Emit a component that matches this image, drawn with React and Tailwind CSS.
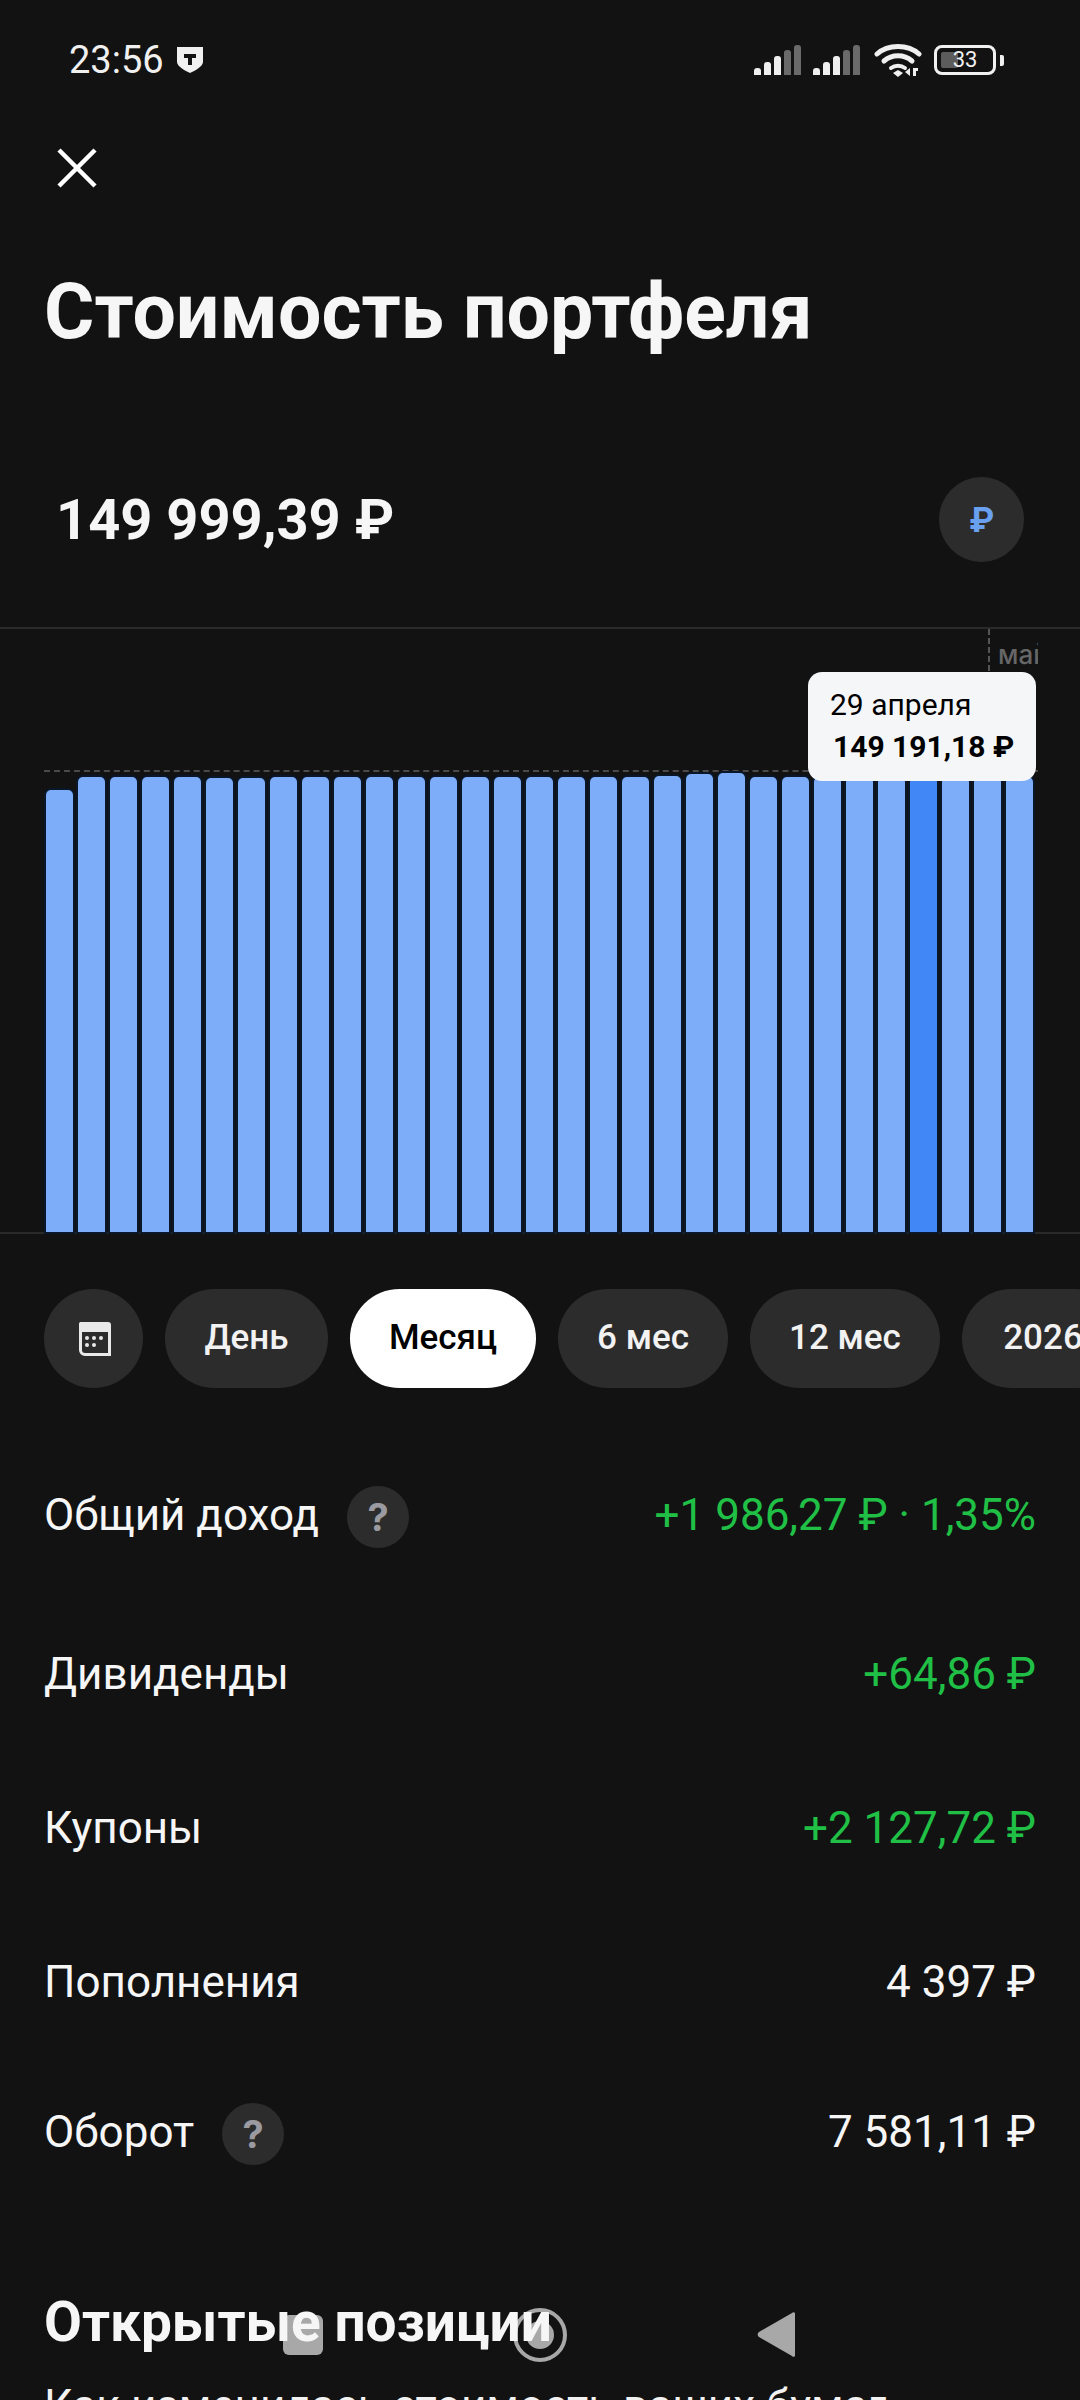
const allTops = [790,777,777,777,777,778,778,777,777,777,777,777,777,777,777,777,777,777,777,776,774,773,777,777,777,777,777,777,777,777,777];

const inter = { fontFamily: 'Inter, "Noto Sans", sans-serif' };
const roboto = { fontFamily: 'Roboto, "Noto Sans", sans-serif' };

function Signal() {
  const hs = [7, 13, 19, 25, 30];
  return (
    <div className="flex items-end gap-[3px] h-[30px]">
      {hs.map((h, i) => (
        <div
          key={i}
          className={i > 2 ? "w-[7px] rounded-t-[3px] bg-[#6a6a6a]" : "w-[7px] rounded-t-[3px] bg-[#efefef]"}
          style={{ height: h }}
        />
      ))}
    </div>
  );
}

function Help() {
  return (
    <div className="w-[62px] h-[62px] mt-[4px] rounded-full bg-[#2c2c2c] flex items-center justify-center text-[#9a9aa0] text-[38px] font-bold" style={inter}>
      ?
    </div>
  );
}

function Row({ label, value, green, help, className }) {
  return (
    <div className={"flex items-center justify-between px-[44px] " + className} style={roboto}>
      <div className="flex items-center gap-[28px] text-[44px] text-[#f6f6f6]">
        <span>{label}</span>
        {help && <Help />}
      </div>
      <div className={green ? "text-[44px] text-[#20c046]" : "text-[44px] text-[#f6f6f6]"}>{value}</div>
    </div>
  );
}

function Chip({ children, active, className = "" }) {
  return (
    <div
      className={
        "h-[99px] shrink-0 rounded-full flex items-center justify-center text-[35px] font-medium " +
        (active ? "bg-white text-black " : "bg-[#2c2c2c] text-[#f2f2f2] ") +
        className
      }
      style={roboto}
    >
      {children}
    </div>
  );
}

export default function App() {
  return (
    <div className="relative w-[1080px] h-[2400px] overflow-hidden bg-[#121212] text-white" style={inter}>
      {/* nav overlay, behind the scrolled text */}
      <div className="absolute left-[283px] top-[2315px] w-[40px] h-[40px] rounded-[6px] bg-[#a8a8a8]" />
      <div className="absolute left-[513px] top-[2308px] w-[54px] h-[54px] rounded-full border-[4px] border-[#a8a8a8] flex items-center justify-center">
        <div className="w-[28px] h-[28px] rounded-full bg-[#a8a8a8]" />
      </div>
      <svg className="absolute left-[757px] top-[2311px]" width="38" height="47" viewBox="0 0 38 47">
        <path d="M38 2v43a2 2 0 0 1-3 0L2 26a3 3 0 0 1 0-5L35 2a2 2 0 0 1 3 0z" fill="#a8a8a8" />
      </svg>

      <div className="relative z-10">
        {/* status bar */}
        <div className="flex items-center justify-between h-[60px] mt-[30px] pl-[69px] pr-[76px]">
          <div className="flex items-center gap-[12px]">
            <span className="text-[38px] text-[#f0f0f0]" style={roboto}>23:56</span>
            <svg width="28" height="28" viewBox="0 0 28 28">
              <path d="M1 1h26v15c0 4-8 9-13 11C9 25 1 20 1 16z" fill="#f0f0f0" />
              <path d="M8 8h12v4h-4v7h-4v-7H8z" fill="#121212" />
            </svg>
          </div>
          <div className="flex items-center gap-[12px]">
            <Signal />
            <Signal />
            <svg width="48" height="36" viewBox="0 0 48 36" className="ml-[2px]">
              <g fill="none" stroke="#f0f0f0" strokeWidth="5" strokeLinecap="round">
                <path d="M3 12C14 2 34 2 45 12" />
                <path d="M10 19c8-7 20-7 28 0" />
                <path d="M17 26c4-3 10-3 14 0" strokeWidth="4" />
              </g>
              <path d="M24 35l-5-4 5-3 5 3z" fill="#f0f0f0" />
              <path d="M36 26v8l-5-4zM39 26h5v3h-2v5h-3z" fill="#f0f0f0" />
            </svg>
            <div className="flex items-center gap-[4px]">
              <div className="relative w-[62px] h-[30px] rounded-[8px] border-[3px] border-[#f0f0f0] flex items-center justify-center">
                <div className="absolute left-[4px] top-[4px] bottom-[4px] w-[17px] rounded-[2px] bg-[#5c5c5c]" />
                <span className="relative text-[22px] leading-none text-[#f0f0f0]" style={roboto}>33</span>
              </div>
              <div className="w-[4px] h-[11px] rounded-r-[2px] bg-[#f0f0f0]" />
            </div>
          </div>
        </div>

        {/* close */}
        <div className="pl-[57px] mt-[58px]">
          <svg width="40" height="40" viewBox="0 0 40 40" fill="none" stroke="#fff" strokeWidth="4.5">
            <path d="M2 2l36 36M38 2L2 38" />
          </svg>
        </div>

        <h1 className="mt-[82px] pl-[44px] text-[77px] leading-[84px] font-bold text-[#f6f6f6]" style={roboto}>Стоимость портфеля</h1>

        {/* amount */}
        <div className="flex items-center justify-between mt-[123px] pl-[56px] pr-[56px]">
          <div className="text-[56px] font-bold text-[#f6f6f6]" style={roboto}>149 999,39 ₽</div>
          <div className="w-[85px] h-[85px] rounded-full bg-[#2c2c2c] flex items-center justify-center">
            <span className="text-[34px] font-bold text-[#6aa0f0]">₽</span>
          </div>
        </div>

        {/* chart */}
        <div className="relative mt-[65px] h-[607px] border-t-2 border-b-2 border-[#2a2a2a]">
          <div className="absolute left-[988px] top-0 h-[42px] border-l-2 border-dashed border-[#555]" />
          <div className="absolute left-[998px] top-[9px] w-[40px] overflow-hidden text-[26px] leading-[34px] font-medium text-[#666]">май</div>
          <div className="absolute left-[44px] right-[42px] top-[141px] border-t-2 border-dashed border-[#4a4a4a]" />
          <div className="absolute left-[46px] right-0 bottom-0 top-0 flex items-end gap-[5px]">
            {allTops.map((t, i) => (
              <div
                key={i}
                className={
                  "w-[27px] rounded-t-[5px] shadow-[0_0_0_2px_#0a1729] " +
                  (i === 27 ? "bg-[#4187f5]" : "bg-[#7dadf9]")
                }
                style={{ height: 1232 - t }}
              />
            ))}
          </div>
          <div className="absolute left-[808px] top-[43px] w-[228px] h-[109px] rounded-[14px] bg-[#f5f6f8] text-black px-[22px] pt-[13px]" style={roboto}>
            <div className="text-[30px] leading-[40px]">29 апреля</div>
            <div className="text-[30px] leading-[44px] font-bold ml-[3px] whitespace-nowrap">149 191,18 ₽</div>
          </div>
        </div>

        {/* chips */}
        <div className="flex items-center gap-[22px] pl-[44px] mt-[55px] w-[1200px]">
          <div className="w-[99px] h-[99px] shrink-0 rounded-full bg-[#2c2c2c] flex items-center justify-center">
            <svg width="36" height="36" viewBox="0 0 36 36">
              <path d="M4 1h28a3 3 0 0 1 3 3v31H9a6 6 0 0 1-6-6V4a3 3 0 0 1 1-3z" fill="#e9e9e9" />
              <path d="M6 11h26v21H9a3 3 0 0 1-3-3z" fill="#2c2c2c" />
              <g fill="#e9e9e9">
                <circle cx="11" cy="17" r="2" /><circle cx="18" cy="17" r="2" /><circle cx="25" cy="17" r="2" />
                <circle cx="11" cy="24" r="2" /><circle cx="18" cy="24" r="2" />
              </g>
            </svg>
          </div>
          <Chip className="w-[163px]">День</Chip>
          <Chip active className="w-[186px]">Месяц</Chip>
          <Chip className="w-[170px]">6 мес</Chip>
          <Chip className="w-[190px]">12 мес</Chip>
          <Chip className="w-[162px]">2026</Chip>
        </div>

        {/* rows */}
        <div className="mt-[87px]">
          <Row label="Общий доход" help value="+1 986,27 ₽ · 1,35%" green className="h-[80px]" />
          <Row label="Дивиденды" value="+64,86 ₽" green className="h-[80px] mt-[79px]" />
          <Row label="Купоны" value="+2 127,72 ₽" green className="h-[80px] mt-[74px]" />
          <Row label="Пополнения" value="4 397 ₽" className="h-[80px] mt-[74px]" />
          <Row label="Оборот" help value="7 581,11 ₽" className="h-[80px] mt-[70px]" />
        </div>

        <h2 className="mt-[120px] pl-[44px] text-[55px] leading-[60px] font-bold text-[#f6f6f6]" style={roboto}>Открытые позиции</h2>
        <p className="mt-[29px] pl-[44px] text-[44px] leading-[50px] text-[#f2f2f2] whitespace-nowrap" style={roboto}>Как изменилась стоимость ваших бумаг</p>
      </div>
    </div>
  );
}
